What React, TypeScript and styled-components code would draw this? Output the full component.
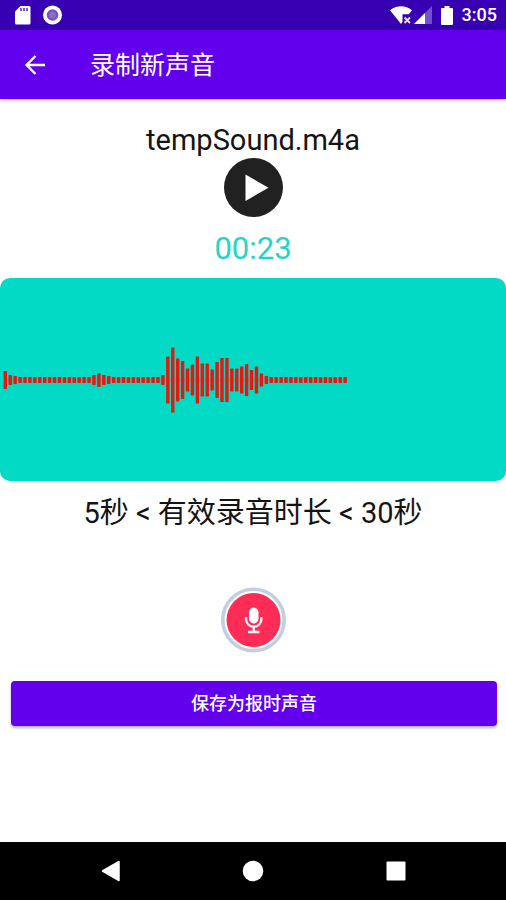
import React from "react";
import styled, { createGlobalStyle } from "styled-components";

const GlobalStyle = createGlobalStyle`
  * { box-sizing: border-box; }
  body {
    margin: 0;
    background: #fff;
    font-family: Roboto, "Noto Sans CJK SC", sans-serif;
    color: #141414;
  }
  button { font: inherit; }
`;

const Screen = styled.div`
  display: flex;
  flex-direction: column;
  min-height: 100vh;
`;

const StatusBar = styled.div`
  display: flex;
  align-items: center;
  justify-content: space-between;
  height: 30px;
  padding: 0 9px 0 14px;
  background: #3700b3;
  color: #fff;
`;

const StatusGroup = styled.div<{ $gap: number }>`
  display: flex;
  align-items: center;
  gap: ${(p) => p.$gap}px;
`;

const StatusIcons = styled.div`
  display: flex;
  align-items: center;
  gap: 2px;
  margin-right: 4px;
`;

const Clock = styled.time`
  margin-left: 4px;
  font-size: 18px;
  font-weight: 500;
  line-height: 32px;
`;

const AppBar = styled.header`
  display: flex;
  align-items: center;
  gap: 38px;
  height: 69px;
  padding: 0 18px;
  background: #6200ee;
  color: #fff;
  box-shadow: 0 1px 4px rgba(0, 0, 0, 0.3);
`;

const IconButton = styled.button`
  display: flex;
  padding: 0;
  border: 0;
  background: none;
  color: inherit;
  cursor: pointer;
`;

const Title = styled.h1`
  margin: 0;
  padding-top: 2px;
  font-size: 25px;
  font-weight: 400;
  line-height: 32px;
`;

const Main = styled.main`
  display: flex;
  flex-direction: column;
  align-items: center;
  padding-top: 24px;
`;

const Label = styled.p`
  margin: 0;
  font-size: 29px;
  line-height: 34px;
`;

const Timer = styled.time`
  margin: 15px 0 12px;
  font-size: 31px;
  line-height: 34px;
  color: #1fd6c6;
`;

const WavePanel = styled.section`
  align-self: stretch;
  display: flex;
  align-items: center;
  height: 203px;
  margin-bottom: 15px;
  border-radius: 10px;
  background: #03dac5;
`;

const RecordButton = styled(IconButton)`
  margin: 57px 0 28px;
  border-radius: 50%;
`;

const SaveArea = styled.div`
  align-self: stretch;
  padding: 0 9px 0 11px;
`;

const SaveButton = styled.button`
  width: 100%;
  height: 45px;
  padding: 0;
  border: 0;
  border-radius: 4px;
  background: #6200ee;
  color: #fff;
  font-size: 18px;
  font-weight: 500;
  line-height: 24px;
  box-shadow: 0 2px 3px rgba(0, 0, 0, 0.3);
  cursor: pointer;
`;

const NavBar = styled.nav`
  display: grid;
  grid-template-columns: repeat(3, 1fr);
  align-items: center;
  height: 58px;
  margin-top: auto;
  padding: 0 39px 0 40px;
  background: #000;
  color: #fff;
`;

const NavButton = styled(IconButton)`
  justify-content: center;
`;

const levels: number[] = [
  18, 10, 8, ...Array(15).fill(6), 10, 14, 10, 8, ...Array(10).fill(6), 10,
  47, 65, 43, 38, 23, 31, 47, 33, 33, 21, 36, 44, 44, 23, 23, 27, 32, 20, 27,
  13, 8, ...Array(16).fill(6),
];

const Waveform = () => (
  <svg width="350" height="70" viewBox="0 0 350 70" role="img" aria-label="录音波形">
    <rect x="4" y="32.500" width="343" height="5" fill="#b9766a" opacity="0.45" />
    {levels.map((h, i) => (
      <rect key={i} x={3.6 + i * 4.925} y={35 - h / 2} width="3.4" height={h} rx="0.4" fill="#e5180f" />
    ))}
  </svg>
);

const SdCard = () => (
  <svg width="17" height="20" viewBox="0 0 17 20" aria-hidden="true">
    <path d="M6.500 1H15a1.500 1.500 0 0 1 1.500 1.500v15.500A1.500 1.500 0 0 1 15 19.500H2.500A1.500 1.500 0 0 1 1 18V6.500z" fill="#fff" />
    <path d="M7 3v3M10 3v3M13 3v3" stroke="#3700b3" strokeWidth="1.300" />
  </svg>
);

const Ring = () => (
  <svg width="20" height="20" viewBox="0 0 20 20" aria-hidden="true">
    <circle cx="9.500" cy="10" r="9.500" fill="#fff" />
    <circle cx="9.500" cy="10" r="5.800" fill="#7650c6" />
    <circle cx="9.500" cy="10" r="3.500" fill="#8a6bce" />
  </svg>
);

const Wifi = () => (
  <svg width="22" height="20" viewBox="0 0 22 20" aria-hidden="true">
    <path d="M0 5.200C6.200-.2 15.800-.2 22 5.200L18.800 9.200H12.500v7.600L11 19z" fill="#fff" />
    <path d="M14.500 12.500l5.500 5.500M20 12.500L14.500 18" stroke="#e7defa" strokeWidth="1.900" />
  </svg>
);

const Signal = () => (
  <svg width="18" height="18" viewBox="0 0 18 18" aria-hidden="true">
    <path d="M18 0v18H0z" fill="#7650cb" />
    <path d="M11 7v11H0z" fill="#fff" />
  </svg>
);

const Battery = () => (
  <svg width="12" height="19" viewBox="0 0 12 19" aria-hidden="true">
    <path d="M3.500 0h5v2H11a1 1 0 0 1 1 1v15a1 1 0 0 1-1 1H1a1 1 0 0 1-1-1V3a1 1 0 0 1 1-1h2.500z" fill="#fff" />
  </svg>
);

export default function App() {
  return (
    <>
      <GlobalStyle />
      <Screen>
        <StatusBar>
          <StatusGroup $gap={12}>
            <SdCard />
            <Ring />
          </StatusGroup>
          <StatusGroup $gap={5}>
            <StatusIcons>
              <Wifi />
              <Signal />
            </StatusIcons>
            <Battery />
            <Clock>3:05</Clock>
          </StatusGroup>
        </StatusBar>
        <AppBar>
          <IconButton type="button" aria-label="返回">
            <svg width="34" height="34" viewBox="0 0 34 34" fill="none" stroke="currentColor" strokeWidth="2.400">
              <path d="M27 17H9M17.500 8L8.600 17l8.900 9" />
            </svg>
          </IconButton>
          <Title>录制新声音</Title>
        </AppBar>
        <Main>
          <Label>tempSound.m4a</Label>
          <IconButton type="button" aria-label="播放">
            <svg width="60" height="60" viewBox="0 0 60 60">
              <circle cx="30.500" cy="30.500" r="29.500" fill="#212121" />
              <path d="M22.500 17.500v26.500L45.500 30.700z" fill="#fff" />
            </svg>
          </IconButton>
          <Timer>00:23</Timer>
          <WavePanel>
            <Waveform />
          </WavePanel>
          <Label>5秒 &lt; 有效录音时长 &lt; 30秒</Label>
          <RecordButton type="button" aria-label="录音">
            <svg width="66" height="66" viewBox="0 0 66 66">
              <circle cx="33.500" cy="33" r="30.700" fill="#fff" stroke="#c4cfdd" strokeWidth="3.600" />
              <circle cx="33.500" cy="33" r="27" fill="#ff2d55" />
              <rect x="29" y="20.500" width="9.500" height="16" rx="4.750" fill="#fff" />
              <path d="M26 30v2a7.700 7.700 0 0 0 15.400 0v-2M33.700 39.700v5M28 45h11.500" fill="none" stroke="#fff" strokeWidth="2.300" />
            </svg>
          </RecordButton>
          <SaveArea>
            <SaveButton type="button">保存为报时声音</SaveButton>
          </SaveArea>
        </Main>
        <NavBar aria-label="系统导航">
          <NavButton type="button" aria-label="后退">
            <svg width="20" height="22" viewBox="0 0 20 22">
              <path d="M18 1.500v19L1.500 11z" fill="#fff" stroke="#fff" strokeWidth="1.500" strokeLinejoin="round" />
            </svg>
          </NavButton>
          <NavButton type="button" aria-label="主页">
            <svg width="22" height="22" viewBox="0 0 22 22">
              <circle cx="11" cy="11" r="10.300" fill="#fff" />
            </svg>
          </NavButton>
          <NavButton type="button" aria-label="最近任务">
            <svg width="20" height="20" viewBox="0 0 20 20">
              <rect x="0.500" y="0.500" width="19" height="19" rx="1" fill="#fff" />
            </svg>
          </NavButton>
        </NavBar>
      </Screen>
    </>
  );
}
